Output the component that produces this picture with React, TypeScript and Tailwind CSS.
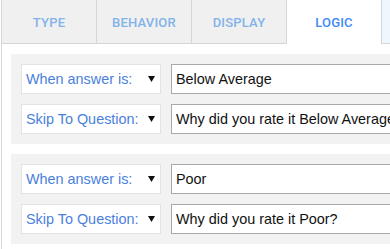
import React from "react";

const tabs = [
  { label: "TYPE", active: false },
  { label: "BEHAVIOR", active: false },
  { label: "DISPLAY", active: false },
  { label: "LOGIC", active: true },
];

const rules = [
  { answer: "Below Average", question: "Why did you rate it Below Average?" },
  { answer: "Poor", question: "Why did you rate it Poor?" },
];

function Arrow() {
  return (
    <svg width="7" height="6" viewBox="0 0 7 6" className="shrink-0">
      <polygon points="0,0 7,0 3.5,6" fill="#111" />
    </svg>
  );
}

function SelectBox({ label }: { label: string }) {
  return (
    <div className="w-[140px] h-[30px] shrink-0 bg-white border border-[#e3e3e3] flex items-center justify-between pl-[4px] pr-[5px]">
      <span className="text-[14.4px] text-[#4a7fdc] leading-none whitespace-nowrap">{label}</span>
      <Arrow />
    </div>
  );
}

function InputBox({ value }: { value: string }) {
  return (
    <div className="w-[260px] h-[30px] shrink-0 bg-white border border-[#a9a9a9] flex items-center pl-[4px] overflow-hidden">
      <span className="text-[14.4px] text-[#111] leading-none whitespace-nowrap">{value}</span>
    </div>
  );
}

export default function App() {
  return (
    <div
      className="w-[390px] h-[249px] overflow-hidden bg-white"
      style={{ fontFamily: '"Liberation Sans", Arial, sans-serif' }}
    >
      <div className="ml-[1px] border-l border-[#d6d6d6] h-full flex flex-col">
        <div className="flex h-[44px] shrink-0">
          {tabs.map((t) => (
            <div
              key={t.label}
              className={
                t.active
                  ? "w-[95px] shrink-0 h-full bg-white border-r border-[#d6d6d6] flex items-center justify-center pt-[2px]"
                  : "w-[95px] shrink-0 h-full bg-[#f0f0f0] border-r border-b border-[#d6d6d6] flex items-center justify-center pt-[2px]"
              }
            >
              <span
                className={
                  t.active
                    ? "text-[13px] font-medium text-[#3d8af5] tracking-[0.2px]"
                    : "text-[13px] font-medium text-[#82b3ea] tracking-[0.2px]"
                }
                style={{ fontFamily: "Roboto, sans-serif" }}
              >
                {t.label}
              </span>
            </div>
          ))}
          <div className="flex-1 h-full bg-[#eef6fe] border-b border-[#d6d6d6]" />
        </div>
        <div className="flex flex-col gap-[10px] pt-[10px] pl-[9px]">
          {rules.map((r) => (
            <div key={r.answer} className="w-[420px] bg-[#f2f2f2] p-[10px] flex flex-col gap-[10px]">
              <div className="flex gap-[10px]">
                <SelectBox label="When answer is:" />
                <InputBox value={r.answer} />
              </div>
              <div className="flex gap-[10px]">
                <SelectBox label="Skip To Question:" />
                <InputBox value={r.question} />
              </div>
            </div>
          ))}
        </div>
      </div>
    </div>
  );
}
